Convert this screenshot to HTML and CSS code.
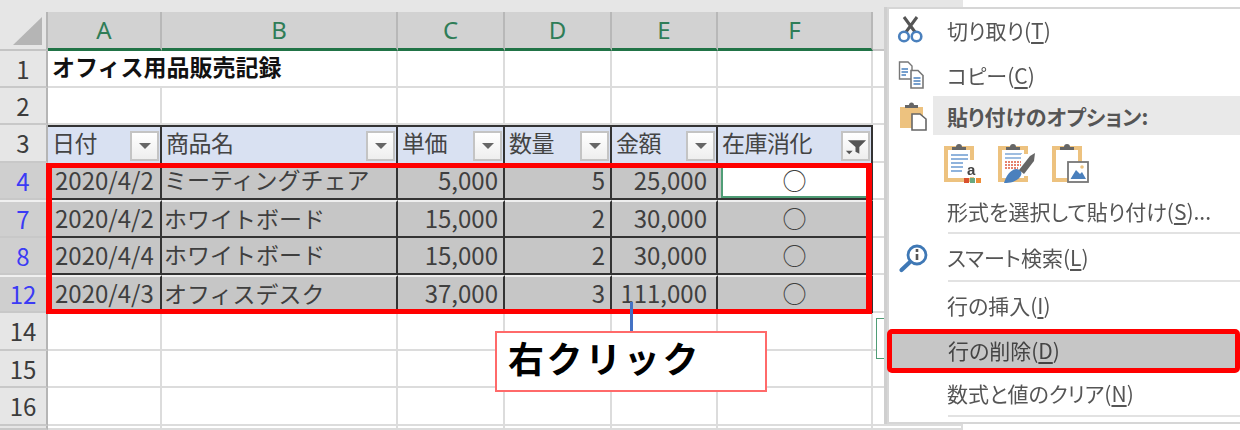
FILE: index.html
```html
<!DOCTYPE html>
<html lang="ja">
<head>
<meta charset="utf-8">
<title>オフィス用品販売記録</title>
<link rel="stylesheet" href="styles.css">
</head>
<body>
<div class="page">
  <div class="sheet">
    <div class="topbar"></div>
    <div class="grid">
      <div class="corner"><svg width="30" height="29" viewBox="0 0 30 29"><path d="M29 0V28H0Z" fill="#b5b5b5"/></svg></div>
      <div class="ch">A</div><div class="ch">B</div><div class="ch">C</div><div class="ch">D</div><div class="ch">E</div><div class="ch">F</div><div class="ch-off"></div>

      <div class="rh">1</div><div class="c title">オフィス用品販売記録</div><div class="c"></div><div class="c"></div><div class="c"></div><div class="c"></div><div class="c"></div><div class="c"></div>
      <div class="rh">2</div><div class="c"></div><div class="c"></div><div class="c"></div><div class="c"></div><div class="c"></div><div class="c"></div><div class="c"></div>

      <div class="rh">3</div>
      <div class="th"><span>日付</span><i class="fb"><b class="tri"></b></i></div>
      <div class="th"><span>商品名</span><i class="fb"><b class="tri"></b></i></div>
      <div class="th"><span>単価</span><i class="fb"><b class="tri"></b></i></div>
      <div class="th"><span>数量</span><i class="fb"><b class="tri"></b></i></div>
      <div class="th"><span>金額</span><i class="fb"><b class="tri"></b></i></div>
      <div class="th"><span>在庫消化</span><i class="fb"><svg width="26" height="24" viewBox="0 0 26 24"><path d="M5 6H24L17 13V20L13 18V13Z" fill="#555"/><path d="M3 17H10L6.500 20.500Z" fill="#555"/></svg></i></div>
      <div class="c"></div>

      <div class="rh sel">4</div><div class="d dt">2020/4/2</div><div class="d nm">ミーティングチェア</div><div class="d r">5,000</div><div class="d r">5</div><div class="d r amt">25,000</div><div class="d mk active">○</div><div class="c"></div>
      <div class="rh sel gap">7</div><div class="d dt gap">2020/4/2</div><div class="d nm gap">ホワイトボード</div><div class="d r gap">15,000</div><div class="d r gap">2</div><div class="d r amt gap">30,000</div><div class="d mk gap">○</div><div class="c"></div>
      <div class="rh sel">8</div><div class="d dt">2020/4/4</div><div class="d nm">ホワイトボード</div><div class="d r">15,000</div><div class="d r">2</div><div class="d r amt">30,000</div><div class="d mk">○</div><div class="c"></div>
      <div class="rh sel gap">12</div><div class="d dt gap">2020/4/3</div><div class="d nm gap">オフィスデスク</div><div class="d r gap">37,000</div><div class="d r gap">3</div><div class="d r amt gap">111,000</div><div class="d mk gap">○</div><div class="c"></div>

      <div class="rh">14</div><div class="c"></div><div class="c"></div><div class="c"></div><div class="c"></div><div class="c"></div><div class="c"></div><div class="c"></div>
      <div class="rh">15</div><div class="c"></div><div class="c"></div><div class="c"></div><div class="c"></div><div class="c"></div><div class="c"></div><div class="c"></div>
      <div class="rh">16</div><div class="c"></div><div class="c"></div><div class="c"></div><div class="c"></div><div class="c"></div><div class="c"></div><div class="c"></div>
      <div class="rh"></div><div class="c"></div><div class="c"></div><div class="c"></div><div class="c"></div><div class="c"></div><div class="c"></div><div class="c"></div>
    </div>
  </div>

  <div class="redbox"></div>
  <div class="leader"></div>
  <div class="callout">右クリック</div>
  <div class="mini"></div>

  <div class="menu">
    <div class="item cut">
      <span class="ico"><svg width="38" height="38" viewBox="0 0 38 38"><path d="M9 6L20 21M22 6L11 21" stroke="#555" stroke-width="3" fill="none"/><circle cx="9" cy="25.500" r="4.800" fill="none" stroke="#4a80bd" stroke-width="2.600"/><circle cx="21.500" cy="25.500" r="4.800" fill="none" stroke="#4a80bd" stroke-width="2.600"/></svg></span>
      <span>切り取り(<u>T</u>)</span>
    </div>
    <div class="item copy">
      <span class="ico"><svg width="38" height="38" viewBox="0 0 38 38"><path d="M4.500 6H13L17 10V23H4.500Z" fill="#fff" stroke="#777" stroke-width="1.400"/><path d="M6.500 13H13M6.500 16H13M6.500 19H11" stroke="#4a80bd" stroke-width="1.400"/><path d="M16 14.500H23L28 19.500V32H16Z" fill="#fff" stroke="#777" stroke-width="1.600"/><path d="M18.500 22H25.500M18.500 25H25.500M18.500 28H25.500" stroke="#4a80bd" stroke-width="1.400"/></svg></span>
      <span>コピー(<u>C</u>)</span>
    </div>
    <div class="item head">
      <span class="ico"><svg width="38" height="38" viewBox="0 0 38 38"><path d="M5 10H28V31H5Z" fill="#edc27f"/><path d="M10 11V8H14A2.500 2.500 0 0 1 19 8H23V11Z" fill="#666"/><path d="M17 17H25L31 22V33H17Z" fill="#fff" stroke="#666" stroke-width="1.600"/></svg></span>
      <span class="headlabel">貼り付けのオプション:</span>
    </div>
    <div class="pasteicons">
      <svg width="38" height="42" viewBox="0 0 38 42"><path d="M2 6H28V38H2Z" fill="none" stroke="#edc27f" stroke-width="4"/><path d="M6 8H26V36H6Z" fill="#fff"/><path d="M8 8V5H12A3 3 0 0 1 18 5H22V8Z" fill="#666"/><path d="M7 13H24M7 17H24M7 21H24M7 25H20M7 29H18" stroke="#6b9bd1" stroke-width="1.700"/><rect x="19" y="18" width="18" height="17" fill="#fff"/><text class="a" x="23" y="33">a</text><rect x="20" y="36" width="5" height="5" fill="#d9502e"/><rect x="26" y="36" width="5" height="5" fill="#69a87f"/><rect x="32" y="36" width="5" height="5" fill="#ef8c36"/></svg>
      <svg width="38" height="42" viewBox="0 0 38 42"><path d="M2 6H28V38H2Z" fill="none" stroke="#edc27f" stroke-width="4"/><path d="M6 8H26V36H6Z" fill="#fff"/><path d="M8 8V5H12A3 3 0 0 1 18 5H22V8Z" fill="#666"/><path d="M7 12H24M7 16H24" stroke="#7fa8d6" stroke-width="1.700"/><path d="M7 20H24M7 23H24M7 26H20" stroke="#dd5a3c" stroke-width="1.700" stroke-dasharray="2 1"/><rect x="23" y="12" width="15" height="22" fill="#fff"/><path d="M6 41C8 34 12 28 18 27C23 27 25 31 22 35C18 40 12 41 6 41Z" fill="#4a80bd"/><path d="M21 28L32 14L37 11L36 19L26 32Z" fill="#666"/></svg>
      <svg width="38" height="42" viewBox="0 0 38 42"><path d="M2 6H28V38H2Z" fill="none" stroke="#edc27f" stroke-width="4"/><path d="M6 8H26V36H6Z" fill="#fff"/><path d="M8 8V5H12A3 3 0 0 1 18 5H22V8Z" fill="#666"/><rect x="16" y="20" width="20" height="20" fill="#fff" stroke="#777" stroke-width="1.800"/><path d="M18.500 37L24 28L28 32L30 30L34 37Z" fill="#4a80bd"/><circle cx="30" cy="25" r="1.800" fill="#edc27f"/></svg>
    </div>
    <div class="item special"><span>形式を選択して貼り付け(<u>S</u>)...</span></div>
    <div class="sep"></div>
    <div class="item smart">
      <span class="ico"><svg width="38" height="38" viewBox="0 0 38 38"><circle cx="22" cy="17" r="9" fill="#fff" stroke="#3f78b5" stroke-width="2.800"/><path d="M15 24L6.500 32" stroke="#3f78b5" stroke-width="4.200" stroke-linecap="round"/><path d="M22 16V22M22 11V14" stroke="#555" stroke-width="2.600"/></svg></span>
      <span>スマート検索(<u>L</u>)</span>
    </div>
    <div class="sep"></div>
    <div class="item ins"><span>行の挿入(<u>I</u>)</span></div>
    <div class="item del"><span>行の削除(<u>D</u>)</span></div>
    <div class="item clr"><span>数式と値のクリア(<u>N</u>)</span></div>
    <div class="sep"></div>
  </div>
</div>
</body>
</html>
```
FILE: styles.css
```css
* { box-sizing: border-box; }
html, body { margin: 0; padding: 0; background: #fff; }
body { width: 1240px; height: 430px; overflow: hidden; font-family: "Noto Sans CJK JP", "Noto Sans", sans-serif; }

.page { position: relative; width: 1240px; height: 430px; overflow: hidden; filter: blur(0.45px); }

.sheet { width: 963px; background: #e6e6e6; }
.topbar { height: 12px; }

.grid {
  display: grid;
  grid-template-columns: 48px 114px 236px 107px 107px 106px 155px 90px;
  grid-template-rows: 39px 37px 37px 38px 37px 38px 37px 38px 38px 37px 38px 4px;
  height: 418px;
}

.corner { background: #e6e6e6; display: flex; align-items: flex-end; justify-content: flex-end; padding: 0 3px 3px 0; border-right: 2px solid #b5b5b5; border-bottom: 2px solid #c4c4c4; }
.corner svg { display: block; }

.ch {
  background: #d2d2d2;
  color: #2f7d57;
  font-size: 24px;
  font-family: "Noto Sans", sans-serif;
  line-height: 1;
  display: flex; align-items: center; justify-content: center;
  border-right: 2px solid #b8b8b8;
  border-bottom: 3px solid #217346;
}
.ch-off { background: #e6e6e6; border-bottom: 2px solid #c4c4c4; }

.rh {
  background: #e6e6e6;
  color: #3c3c3c;
  font-size: 24px;
  line-height: 1;
  display: flex; align-items: center; justify-content: center;
  border-right: 2px solid #b5b5b5;
  border-bottom: 2px solid #c8c8c8;
}
.rh.sel { background: #cfcfcf; color: #3b3bf5; border-right-color: #217346; }
.rh.gap { border-top: 2px solid #f0f0f0; }

.c { background: #fff; border-right: 2px solid #dcdcdc; border-bottom: 2px solid #dcdcdc; min-width: 0; }
.title { font-weight: 700; font-size: 23px; color: #111; white-space: nowrap; padding-left: 4px; line-height: 31px; border-right: 0; position: relative; }

.th {
  background: #d9e1f2;
  color: #444;
  font-size: 23px;
  display: flex; align-items: center; justify-content: space-between;
  padding: 0 1px 0 4px;
  border-top: 2px solid #333;
  border-right: 2px solid #333;
  letter-spacing: -0.5px;
  white-space: nowrap;
}
.th span { margin-bottom: 6px; }
.fb {
  width: 29px; height: 30px;
  display: flex; align-items: center; justify-content: center;
  border: 2px solid #c4c4c4;
  background: linear-gradient(#fff, #eeeeee);
  margin-top: 2px;
}
.tri { width: 0; height: 0; border-left: 6px solid transparent; border-right: 6px solid transparent; border-top: 6px solid #666; }

.d {
  background: #c6c6c6;
  color: #3f3f3f;
  font-size: 24px;
  line-height: 1;
  display: flex; align-items: center;
  white-space: nowrap;
  border-right: 2px solid #333;
  border-bottom: 2px solid #333;
  padding-bottom: 2px;
  min-width: 0;
}
.d.gap { border-top: 2px solid #efefef; }
.dt { padding-left: 7px; justify-content: flex-start; }
.nm { padding-left: 2px; font-size: 23px; }
.r { justify-content: flex-end; padding-right: 5px; }
.amt { padding-right: 9px; }
.mk { justify-content: center; }
.active { background: #fff; box-shadow: inset 3px 0 0 #c6c6c6, inset 5px 0 0 #4f9d76, inset 0 -2px 0 #4f9d76; }

.redbox { position: absolute; left: 46px; top: 163px; width: 826px; height: 151px; border: 5px solid #ff0000; border-left-width: 6px; border-right-width: 6px; }
.leader { position: absolute; left: 630px; top: 302px; width: 3px; height: 30px; background: #4472c4; }
.callout {
  position: absolute; left: 495px; top: 331px; width: 272px; height: 61px;
  background: #fff; border: 2px solid #ff6a6a;
  font-size: 36px; font-weight: 700; color: #000; line-height: 49px;
  padding-left: 11px; letter-spacing: 2.6px;
}
.mini { position: absolute; left: 876px; top: 318px; width: 14px; height: 41px; border: 1px solid #4f9d76; background: #fff; }

.menu {
  position: absolute; left: 887px; top: 7px; width: 353px; height: 417px;
  background: #fff;
  border: 2px solid #d6d6d6; border-right: 0;
  box-shadow: -3px 0 0 #cfcfcf;
  color: #555;
  font-size: 21px;
  display: flex; flex-direction: column;
  font-feature-settings: "palt";
}
.item { display: flex; align-items: center; padding-left: 58px; white-space: nowrap; position: relative; flex: none; }
.item u { text-underline-offset: 3px; }
.ico { position: absolute; left: 6px; top: 50%; transform: translateY(-50%); width: 38px; height: 38px; }
.ico svg { display: block; }
.cut { height: 42px; margin-bottom: 2px; }
.copy { height: 43px; }
.head { height: 39px; padding-left: 58px; font-weight: 700; z-index: 0; }
.head::before { content: ""; position: absolute; left: 44px; right: 0; top: 0; bottom: 0; background: #e9e9e9; z-index: -1; }
.pasteicons { height: 55px; display: flex; align-items: center; gap: 16px; padding-left: 55px; flex: none; }
.pasteicons svg { display: block; }
.a { font-family: "Liberation Sans", sans-serif; font-size: 15px; font-weight: 700; fill: #444; }
.special { height: 42px; }
.sep { height: 2px; margin-left: 59px; background: #e2e2e2; flex: none; }
.smart { height: 46px; }
.ins { height: 46px; }
.del { height: 44px; margin-top: 1px; margin-left: -2px; padding: 0 0 3px 56px; background: #c6c6c6; border: 5px solid #ff0000; border-radius: 5px; color: #444; }
.clr { height: 40px; margin-bottom: 2px; }
```
